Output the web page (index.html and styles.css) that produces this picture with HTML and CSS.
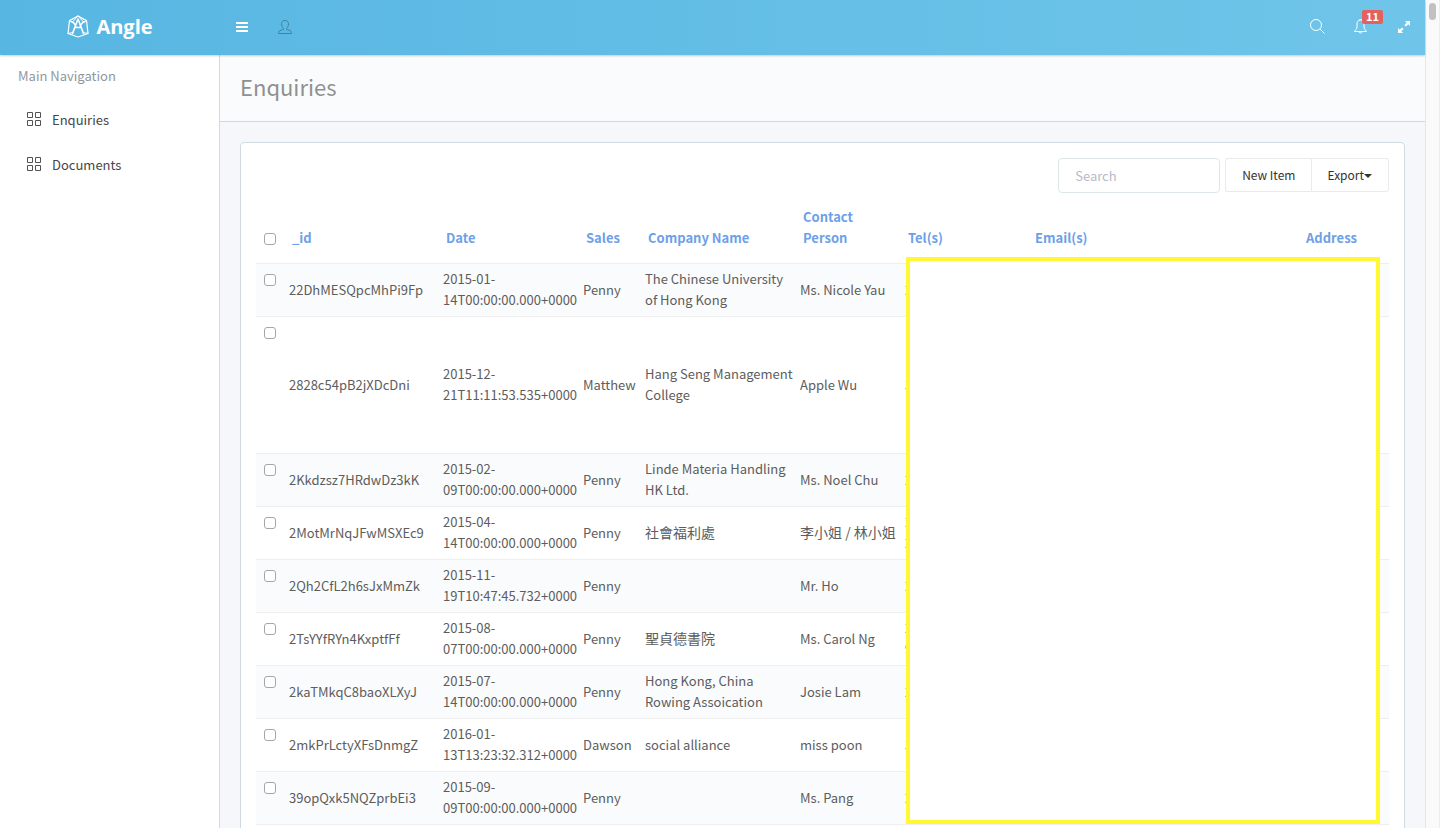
FILE: index.html
```html
<!DOCTYPE html>
<html lang="en">
<head>
<meta charset="UTF-8">
<meta name="viewport" content="width=device-width, initial-scale=1">
<title>Enquiries</title>
<link rel="stylesheet" href="styles.css">
</head>
<body>
<div class="wrapper">
  <header class="topnavbar">
    <a class="brand" href="#">
      <svg width="22" height="23" viewBox="0 0 22 23" fill="none" stroke="#fff" stroke-linejoin="round" stroke-linecap="round">
        <path d="M11 1L2.500 5.500L1 18.500L11 22L21 18.500L19.500 5.500Z" stroke-width="1.200"/>
        <path d="M2.500 5.500L7 3.500M19.500 5.500L15 3.500M11 1L5.500 7M11 1L16.500 7M1 18.500L6 17.500M21 18.500L16 17.500" stroke-width="1"/>
        <path d="M4 6.500Q8 7.500 9 12.500H13Q14 7.500 18 6.500M11 4L5.500 18.500M11 4L16.500 18.500" stroke-width="1.600"/>
      </svg>
      <span>Angle</span>
    </a>
    <div class="nav-left">
      <button type="button" class="icon-btn" aria-label="Toggle menu">
        <svg width="12" height="10" viewBox="0 0 12 10" fill="#fff"><path d="M0 0h12v2H0zM0 4h12v2H0zM0 8h12v2H0z"/></svg>
      </button>
      <button type="button" class="icon-btn" aria-label="User">
        <svg width="14" height="14" viewBox="0 0 14 14" fill="none" stroke="#3f82a1" stroke-linejoin="round"><path d="M5.500 8.500C4.300 7.500 3.500 5.500 3.500 3.700C3.500 1.700 5 .5 7 .5S10.500 1.700 10.500 3.700C10.500 5.500 9.700 7.500 8.500 8.500V9.500L12 10.500C13 10.900 13.500 12 13.500 13.500H.5C.5 12 1 10.900 2 10.500L5.500 9.500Z"/></svg>
      </button>
    </div>
    <div class="nav-right">
      <button type="button" class="icon-btn" aria-label="Search">
        <svg width="15" height="15" viewBox="0 0 15 15" fill="none" stroke="#fff"><circle cx="6" cy="6" r="5.500"/><path d="M10 10l4.500 4.500"/></svg>
      </button>
      <button type="button" class="icon-btn" aria-label="Alerts">
        <svg width="13" height="15" viewBox="0 0 13 15" fill="none" stroke="#fff" stroke-linejoin="round"><path d="M6.500 1C4 1 3 3 3 5V8C3 10 1.500 10.500 .5 12.500H12.500C11.500 10.500 10 10 10 8V5C10 3 9 1 6.500 1ZM5 12.500a1.500 1.500 0 0 0 3 0M5.500 .5h2"/></svg>
        <span class="badge">11</span>
      </button>
      <button type="button" class="icon-btn" aria-label="Full screen">
        <svg width="12" height="12" viewBox="0 0 12 12" fill="#fff"><path d="M7 0h5v5l-1.700-1.700L8 5.600L6.400 4L8.700 1.700ZM5 12H0V7l1.700 1.700L4 6.400L5.600 8L3.300 10.300Z"/></svg>
      </button>
    </div>
  </header>

  <div class="page">
    <nav class="sidebar">
      <div class="nav-heading">Main Navigation</div>
      <ul>
        <li><a href="#">
          <svg width="14" height="16" viewBox="0 0 14 16" fill="none" stroke="#515253"><path d="M.5.5h5v5h-5zM8.500.5h5v5h-5zM.5 8.500h5v5h-5zM8.500 8.500h5v5h-5z"/></svg>
          <span>Enquiries</span></a></li>
        <li><a href="#">
          <svg width="14" height="16" viewBox="0 0 14 16" fill="none" stroke="#515253"><path d="M.5.5h5v5h-5zM8.500.5h5v5h-5zM.5 8.500h5v5h-5zM8.500 8.500h5v5h-5z"/></svg>
          <span>Documents</span></a></li>
      </ul>
    </nav>

    <main class="content">
      <h3 class="content-heading">Enquiries</h3>
      <section class="panel">
        <div class="toolbar">
          <input class="form-control" type="text" placeholder="Search" aria-label="Search">
          <div class="btn-group">
            <button type="button" class="btn">New Item</button>
            <button type="button" class="btn">Export<span class="caret"></span></button>
          </div>
        </div>
        <div class="table-wrap">
          <table class="table">
            <colgroup>
              <col class="col-check"><col class="col-id"><col class="col-date"><col class="col-sales"><col class="col-company"><col class="col-contact"><col class="col-tel"><col class="col-email"><col>
            </colgroup>
            <thead>
              <tr>
                <th class="check"><input type="checkbox" aria-label="Select all"></th>
                <th><a href="#">_id</a></th>
                <th><a href="#">Date</a></th>
                <th><a href="#">Sales</a></th>
                <th><a href="#">Company Name</a></th>
                <th><a href="#">Contact Person</a></th>
                <th><a href="#">Tel(s)</a></th>
                <th><a href="#">Email(s)</a></th>
                <th><a href="#">Address</a></th>
              </tr>
            </thead>
            <tbody>
              <tr>
                <td class="check"><input type="checkbox" aria-label="Select row"></td>
                <td>22DhMESQpcMhPi9Fp</td>
                <td>2015-01-<br>14T00:00:00.000+0000</td>
                <td>Penny</td>
                <td>The Chinese University of Hong Kong</td>
                <td>Ms. Nicole Yau</td>
                <td>2</td><td></td><td></td>
              </tr>
              <tr class="tall">
                <td class="check"><input type="checkbox" aria-label="Select row"></td>
                <td>2828c54pB2jXDcDni</td>
                <td>2015-12-<br>21T11:11:53.535+0000</td>
                <td>Matthew</td>
                <td>Hang Seng Management College</td>
                <td>Apple Wu</td>
                <td>3</td><td></td><td></td>
              </tr>
              <tr>
                <td class="check"><input type="checkbox" aria-label="Select row"></td>
                <td>2Kkdzsz7HRdwDz3kK</td>
                <td>2015-02-<br>09T00:00:00.000+0000</td>
                <td>Penny</td>
                <td>Linde Materia Handling HK Ltd.</td>
                <td>Ms. Noel Chu</td>
                <td>2</td><td></td><td></td>
              </tr>
              <tr>
                <td class="check"><input type="checkbox" aria-label="Select row"></td>
                <td>2MotMrNqJFwMSXEc9</td>
                <td>2015-04-<br>14T00:00:00.000+0000</td>
                <td>Penny</td>
                <td class="zh" lang="zh-Hant">社會福利處</td>
                <td class="zh" lang="zh-Hant">李小姐 / 林小姐</td>
                <td>2<br>2</td><td></td><td></td>
              </tr>
              <tr>
                <td class="check"><input type="checkbox" aria-label="Select row"></td>
                <td>2Qh2CfL2h6sJxMmZk</td>
                <td>2015-11-<br>19T10:47:45.732+0000</td>
                <td>Penny</td>
                <td></td>
                <td>Mr. Ho</td>
                <td>2</td><td></td><td></td>
              </tr>
              <tr>
                <td class="check"><input type="checkbox" aria-label="Select row"></td>
                <td>2TsYYfRYn4KxptfFf</td>
                <td>2015-08-<br>07T00:00:00.000+0000</td>
                <td>Penny</td>
                <td class="zh" lang="zh-Hant">聖貞德書院</td>
                <td>Ms. Carol Ng</td>
                <td>2<br>9</td><td></td><td></td>
              </tr>
              <tr>
                <td class="check"><input type="checkbox" aria-label="Select row"></td>
                <td>2kaTMkqC8baoXLXyJ</td>
                <td>2015-07-<br>14T00:00:00.000+0000</td>
                <td>Penny</td>
                <td>Hong Kong, China Rowing Assoication</td>
                <td>Josie Lam</td>
                <td>2</td><td></td><td></td>
              </tr>
              <tr>
                <td class="check"><input type="checkbox" aria-label="Select row"></td>
                <td>2mkPrLctyXFsDnmgZ</td>
                <td>2016-01-<br>13T13:23:32.312+0000</td>
                <td>Dawson</td>
                <td>social alliance</td>
                <td>miss poon</td>
                <td>3</td><td></td><td></td>
              </tr>
              <tr>
                <td class="check"><input type="checkbox" aria-label="Select row"></td>
                <td>39opQxk5NQZprbEi3</td>
                <td>2015-09-<br>09T00:00:00.000+0000</td>
                <td>Penny</td>
                <td></td>
                <td>Ms. Pang</td>
                <td>2</td><td></td><td></td>
              </tr>
            </tbody>
          </table>
          <!-- covers the private contact columns -->
          <div class="redacted"></div>
        </div>
      </section>
    </main>
  </div>
</div>
<div class="scroll-track"><div class="scroll-thumb"></div></div>
</body>
</html>
```
FILE: styles.css
```css
* {
  box-sizing: border-box;
}

body {
  margin: 0;
  display: flex;
  height: 100vh;
  overflow: hidden;
  background: #f5f7fa;
  color: #5d5d5d;
  font-family: "Noto Sans CJK TC", "Noto Sans", sans-serif;
  font-size: 13px;
  line-height: 21px;
}

a {
  text-decoration: none;
}

button,
input {
  font-family: inherit;
}

svg {
  display: block;
}

.wrapper {
  flex: 1;
  min-width: 0;
  display: flex;
  flex-direction: column;
}

/* top bar */
.topnavbar {
  position: relative;
  z-index: 2;
  flex: none;
  display: flex;
  align-items: center;
  height: 55px;
  padding-bottom: 2px;
  background: linear-gradient(to right, #57b6e2, #6fc5e9);
  box-shadow: 0 1px 2px rgba(0, 0, 0, 0.2);
}

.brand {
  width: 220px;
  display: flex;
  align-items: center;
  justify-content: center;
  gap: 7px;
  color: #fff;
  font-family: "Open Sans", sans-serif;
  font-size: 20px;
  font-weight: bold;
}

.nav-left,
.nav-right {
  display: flex;
}

.nav-right {
  margin-left: auto;
}

.icon-btn {
  position: relative;
  display: flex;
  align-items: center;
  justify-content: center;
  width: 43px;
  height: 53px;
  padding: 0;
  border: 0;
  background: none;
}

.badge {
  position: absolute;
  top: 10px;
  left: 23px;
  width: 21px;
  height: 14px;
  border-radius: 2px;
  background: #e2625f;
  color: #fff;
  font-size: 11px;
  font-weight: bold;
  line-height: 13px;
}

/* sidebar */
.page {
  flex: 1;
  min-height: 0;
  display: flex;
}

.sidebar {
  flex: none;
  width: 220px;
  border-right: 1px solid #d3d9de;
  background: #fff;
}

.nav-heading {
  padding: 10px 18px 11px;
  color: #8f979e;
}

.sidebar ul {
  margin: 0;
  padding: 0;
  list-style: none;
}

.sidebar a {
  display: flex;
  align-items: center;
  gap: 11px;
  height: 45px;
  padding: 0 27px;
  color: #454647;
}

/* content */
.content {
  flex: 1;
  min-width: 0;
  overflow: hidden;
}

.content-heading {
  margin: 0 0 20px;
  padding: 13px 20px 17px;
  border-bottom: 1px solid #cfd8e0;
  background: #fafbfd;
  color: #909090;
  font-size: 22px;
  font-weight: normal;
  line-height: 36px;
}

.panel {
  margin: 0 20px 20px;
  padding: 15px;
  border: 1px solid #cfdbe2;
  border-radius: 4px;
  background: #fff;
}

.toolbar {
  display: flex;
  justify-content: flex-end;
  gap: 5px;
  margin-bottom: 13px;
}

.form-control {
  width: 162px;
  height: 35px;
  padding: 6px 16px;
  border: 1px solid #dde6e9;
  border-radius: 4px;
  font-size: 13px;
}

.form-control::placeholder {
  color: #b7bac9;
}

.btn-group {
  display: flex;
}

.btn {
  display: flex;
  align-items: center;
  height: 34px;
  padding: 0 16px 2px;
  border: 1px solid #eaeaea;
  border-radius: 0 3px 3px 0;
  background: #fff;
  color: #333;
  font-size: 12px;
}

.btn:last-child {
  padding-left: 15px;
}

.btn:first-child {
  border-right: 0;
  border-radius: 3px 0 0 3px;
}

.caret {
  margin-top: 3px;
  border-top: 4px solid #333;
  border-right: 4px solid transparent;
  border-left: 4px solid transparent;
}

/* table */
.table-wrap {
  position: relative;
}

.table {
  width: 100%;
  table-layout: fixed;
  border-collapse: separate;
  border-spacing: 0;
}

.col-check { width: 28px; }
.col-id { width: 154px; }
.col-date { width: 140px; }
.col-sales { width: 62px; }
.col-company { width: 155px; }
.col-contact { width: 105px; }
.col-tel { width: 127px; }
.col-email { width: 271px; }

.table th {
  padding: 0 8px 15px;
  border-bottom: 1px solid #eee;
  text-align: left;
  vertical-align: bottom;
}

.table th a {
  color: #6e9fe8;
}

.table td {
  height: 53px;
  padding: 4px 0 6px 5px;
  border-bottom: 1px solid #eee;
}

.table tbody tr:nth-child(odd) {
  background: #fafbfc;
}

.table .tall td {
  height: 137px;
}

.table .zh {
  font-size: 14px;
}

.table .check {
  padding-left: 8px;
  padding-right: 0;
}

.table td.check {
  padding-top: 10px;
  vertical-align: top;
}

.check input {
  display: block;
  width: 12px;
  height: 12px;
  margin: 0;
  border: 1px solid #a6a6a6;
  border-radius: 3px;
  background: #fff;
  appearance: none;
}

.table th.check {
  padding-bottom: 18px;
}

.redacted {
  position: absolute;
  top: 51px;
  right: 9px;
  bottom: 1px;
  left: 650px;
  border: 4px solid #fff833;
  background: #fff;
}

/* scrollbar */
.scroll-track {
  flex: none;
  width: 15px;
  padding: 3px 3px 0;
  border-left: 1px solid #e6e6e6;
  border-right: 1px solid #ededed;
  background: #fafafa;
}

.scroll-thumb {
  height: 17px;
  border-radius: 4px;
  background: #c1c1c1;
}
```
